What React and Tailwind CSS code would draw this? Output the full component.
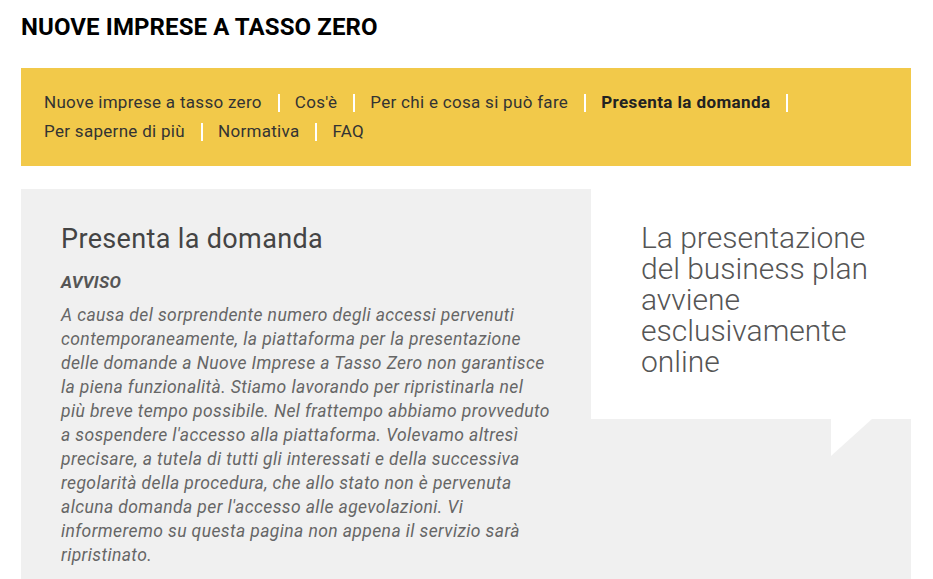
import React from 'react';

const navItems = [
  { label: 'Nuove imprese a tasso zero' },
  { label: "Cos'è" },
  { label: 'Per chi e cosa si può fare' },
  { label: 'Presenta la domanda', active: true },
  { label: 'Per saperne di più' },
  { label: 'Normativa' },
  { label: 'FAQ' },
];

const App = () => {
  return (
    <div className="min-h-screen bg-white px-[21px] pt-[12px] font-['Roboto',sans-serif] w-[933px]">
      {/* Page title */}
      <h1 className="text-[24px] leading-[30px] font-bold text-black tracking-[0.1px]">
        NUOVE IMPRESE A TASSO ZERO
      </h1>

      {/* Yellow section menu */}
      <nav className="mt-[26px] w-[890px] bg-[#f2c94a] pl-[23px] pr-[20px] py-[20px]">
        <ul className="flex flex-wrap text-[17px] leading-[29px] text-[#333] tracking-[0.3px]">
          {navItems.map((item, i) => (
            <li key={item.label} className="flex items-center">
              <span className={item.active ? 'font-bold text-[#222] tracking-[0.4px]' : ''}>{item.label}</span>
              {i < navItems.length - 1 && (
                <span className="ml-[16px] mr-[15px] w-[2px] h-[18px] bg-white" />
              )}
            </li>
          ))}
        </ul>
      </nav>

      {/* Content panel */}
      <div className="mt-[23px] w-[890px] bg-[#f0f0f0] flex">
        <div className="w-[570px] pl-[40px] pr-[40px] pt-[34px] pb-[40px]">
          <h2 className="text-[27px] leading-[32px] text-[#444] tracking-[0.35px]">Presenta la domanda</h2>
          <h3 className="mt-[15px] text-[17px] leading-[24px] font-bold italic text-[#555] tracking-[0.3px]">AVVISO</h3>
          <p className="mt-[9px] text-[17.5px] leading-[24px] italic text-[#666] tracking-[0.4px]">
            A causa del sorprendente numero degli accessi pervenuti contemporaneamente, la piattaforma per la
            presentazione delle domande a Nuove Imprese a Tasso Zero non garantisce la piena funzionalità.
            Stiamo lavorando per ripristinarla nel più breve tempo possibile. Nel frattempo abbiamo provveduto
            a sospendere l'accesso alla piattaforma. Volevamo altresì precisare, a tutela di tutti gli
            interessati e della successiva regolarità della procedura, che allo stato non è pervenuta alcuna
            domanda per l'accesso alle agevolazioni. Vi informeremo su questa pagina non appena il servizio
            sarà ripristinato.
          </p>
        </div>

        <div className="flex-1 flex flex-col">
          <div className="h-[230px] bg-white pl-[50px] pr-[20px] pt-[33px]">
            <p className="text-[30px] leading-[31px] font-light text-[#555]">
              La presentazione del business plan avviene esclusivamente online
            </p>
          </div>
          {/* speech bubble tail */}
          <svg className="ml-[240px] block" width="41" height="37" viewBox="0 0 41 37">
            <polygon points="0,0 41,0 0,37" fill="#ffffff" />
          </svg>
        </div>
      </div>
    </div>
  );
};

export default App;
